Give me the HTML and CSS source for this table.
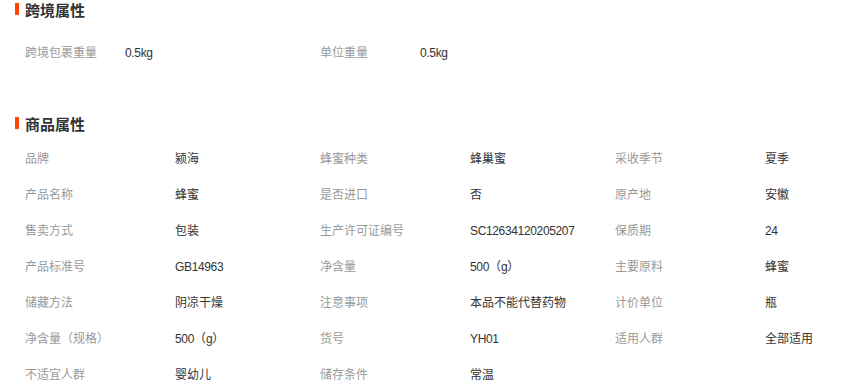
FILE: index.html
```html
<!DOCTYPE html>
<html lang="zh-CN">
<head>
<meta charset="utf-8">
<title>商品属性</title>
<link rel="stylesheet" href="styles.css">
</head>
<body>
<div class="page">
  <section class="block block-cross">
    <h2 class="block-title">跨境属性</h2>
    <div class="attr-grid cols-2">
      <div class="attr"><span class="attr-label">跨境包裹重量</span><span class="attr-value"><span class="en">0.5kg</span></span></div>
      <div class="attr"><span class="attr-label">单位重量</span><span class="attr-value"><span class="en">0.5kg</span></span></div>
    </div>
  </section>

  <section class="block block-goods">
    <h2 class="block-title">商品属性</h2>
    <div class="attr-grid cols-3">
      <div class="attr"><span class="attr-label">品牌</span><span class="attr-value">颍海</span></div>
      <div class="attr"><span class="attr-label">蜂蜜种类</span><span class="attr-value">蜂巢蜜</span></div>
      <div class="attr"><span class="attr-label">采收季节</span><span class="attr-value">夏季</span></div>

      <div class="attr"><span class="attr-label">产品名称</span><span class="attr-value">蜂蜜</span></div>
      <div class="attr"><span class="attr-label">是否进口</span><span class="attr-value">否</span></div>
      <div class="attr"><span class="attr-label">原产地</span><span class="attr-value">安徽</span></div>

      <div class="attr"><span class="attr-label">售卖方式</span><span class="attr-value">包装</span></div>
      <div class="attr"><span class="attr-label">生产许可证编号</span><span class="attr-value"><span class="en">SC12634120205207</span></span></div>
      <div class="attr"><span class="attr-label">保质期</span><span class="attr-value"><span class="en">24</span></span></div>

      <div class="attr"><span class="attr-label">产品标准号</span><span class="attr-value"><span class="en">GB14963</span></span></div>
      <div class="attr"><span class="attr-label">净含量</span><span class="attr-value"><span class="en">500</span>（<span class="en">g</span>）</span></div>
      <div class="attr"><span class="attr-label">主要原料</span><span class="attr-value">蜂蜜</span></div>

      <div class="attr"><span class="attr-label">储藏方法</span><span class="attr-value">阴凉干燥</span></div>
      <div class="attr"><span class="attr-label">注意事项</span><span class="attr-value">本品不能代替药物</span></div>
      <div class="attr"><span class="attr-label">计价单位</span><span class="attr-value">瓶</span></div>

      <div class="attr"><span class="attr-label">净含量（规格）</span><span class="attr-value"><span class="en">500</span>（<span class="en">g</span>）</span></div>
      <div class="attr"><span class="attr-label">货号</span><span class="attr-value"><span class="en">YH01</span></span></div>
      <div class="attr"><span class="attr-label">适用人群</span><span class="attr-value">全部适用</span></div>

      <div class="attr"><span class="attr-label">不适宜人群</span><span class="attr-value">婴幼儿</span></div>
      <div class="attr"><span class="attr-label">储存条件</span><span class="attr-value">常温</span></div>
    </div>
  </section>
</div>
</body>
</html>
```
FILE: styles.css
```css
* { box-sizing: border-box; }

html, body {
  margin: 0;
  padding: 0;
  background: #ffffff;
}

body {
  font-family: "Noto Sans CJK SC", "Liberation Sans", sans-serif;
  font-size: 12px;
  color: #333333;
  overflow: hidden;
}

.page {
  width: 858px;
}

.block-title {
  display: flex;
  align-items: center;
  height: 20px;
  margin: 0;
  padding-left: 15px;
  font-size: 15px;
  font-weight: bold;
  color: #333333;
  line-height: 20px;
}

.block-title::before {
  content: "";
  display: block;
  width: 4px;
  height: 12px;
  margin-right: 6px;
  margin-top: -2px;
  background: #ff4400;
}

.block-cross .attr-grid {
  margin-top: 14px;
}

.block-goods {
  margin-top: 44px;
}

.block-goods .attr-grid {
  margin-top: 6px;
}

.attr-grid {
  display: grid;
  padding-left: 25px;
  grid-auto-rows: 36px;
}

.cols-2 {
  grid-template-columns: 295px 295px;
}

.cols-3 {
  grid-template-columns: 295px 295px minmax(0, 1fr);
}

.attr {
  display: flex;
  align-items: center;
  line-height: 36px;
  white-space: nowrap;
}

.attr-label {
  color: #999999;
  flex: none;
}

.cols-2 .attr-label {
  width: 100px;
}

.cols-3 .attr-label {
  width: 150px;
}

.attr-value {
  color: #333333;
}

.en {
  font-family: "Liberation Sans", sans-serif;
  font-size: 12px;
  letter-spacing: -0.35px;
}
```
